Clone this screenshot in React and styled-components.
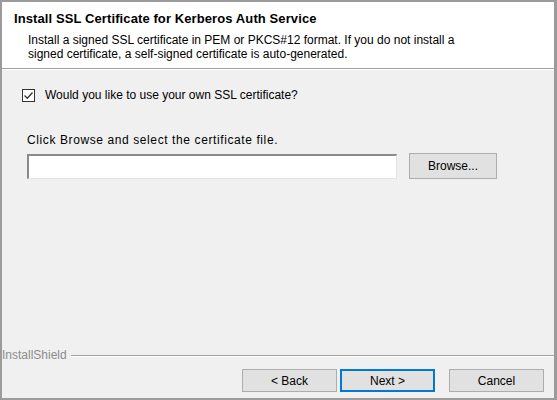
import React from "react";
import styled, { createGlobalStyle } from "styled-components";

const Global = createGlobalStyle`
  html, body { margin: 0; padding: 0; background: #f0f0f0; }
  body { font-family: "Liberation Sans", Arial, sans-serif; font-size: 12px; color: #000; }
  * { box-sizing: border-box; }
`;

const Frame = styled.div`
  width: 557px;
  height: 400px;
  border: 2px solid #9b9b9b;
  border-right-width: 3px;
  background: #f0f0f0;
  display: flex;
  flex-direction: column;
`;

const Header = styled.header`
  background: #fff;
  height: 67px;
  padding: 9px 0 0 12px;
  border-bottom: 1px solid #a0a0a0;
  box-shadow: 0 1px 0 #fff;
`;

const Title = styled.h1`
  margin: 0;
  font-size: 13px;
  font-weight: bold;
  line-height: 15px;
  letter-spacing: 0.1px;
`;

const Subtitle = styled.p`
  margin: 7px 0 0 14px;
  line-height: 14px;
  font-size: 12px;
`;

const Body = styled.main`
  flex: 1;
  padding: 18px 0 0 20px;
`;

const CheckRow = styled.label`
  display: flex;
  align-items: center;
  gap: 10px;
  height: 16px;
`;

const Box = styled.span`
  width: 13px;
  height: 13px;
  border: 1px solid #333;
  background: #fff;
  display: flex;
  align-items: center;
  justify-content: center;
`;

const Prompt = styled.div`
  margin: 30px 0 0 5px;
  line-height: 14px;
  letter-spacing: 0.6px;
`;

const FileRow = styled.div`
  display: flex;
  align-items: center;
  gap: 12px;
  margin: 6px 0 0 5px;
`;

const Field = styled.div`
  width: 370px;
  height: 25px;
  background: #fff;
  border-top: 2px solid #8a8a8a;
  border-left: 2px solid #8a8a8a;
  border-bottom: 1px solid #e3e3e3;
  border-right: 1px solid #e3e3e3;
`;

const Button = styled.button`
  width: ${(p) => p.$w || 95}px;
  height: ${(p) => p.$h || 23}px;
  background: #e1e1e1;
  border: ${(p) => (p.$default ? "2px solid #0078d7" : "1px solid #adadad")};
  font: inherit;
  color: #000;
  padding: 0;
`;

const Footer = styled.footer`
  padding: 0 10px 6px 0;
`;

const Legend = styled.div`
  display: flex;
  align-items: center;
  gap: 4px;
  color: #8c8c8c;
  line-height: 14px;
  &::after {
    content: "";
    flex: 1;
    height: 1px;
    background: #a0a0a0;
    box-shadow: 0 1px 0 #fff;
    margin-right: -10px;
  }
`;

const Actions = styled.div`
  display: flex;
  justify-content: flex-end;
  gap: 3px;
  margin-top: 7px;
`;

const Spacer = styled.span`
  width: 8px;
`;

export default function App() {
  return (
    <>
      <Global />
      <Frame>
        <Header>
          <Title>Install SSL Certificate for Kerberos Auth Service</Title>
          <Subtitle>
            Install a signed SSL certificate in PEM or PKCS#12 format. If you do not install a
            <br />
            signed certificate, a self-signed certificate is auto-generated.
          </Subtitle>
        </Header>
        <Body>
          <CheckRow>
            <Box>
              <svg width="11" height="11" viewBox="0 0 11 11">
                <path d="M1.5 5.5 L4.3 8.3 L9.5 2.5" fill="none" stroke="#333" strokeWidth="1.3" />
              </svg>
            </Box>
            Would you like to use your own SSL certificate?
          </CheckRow>
          <Prompt>Click Browse and select the certificate file.</Prompt>
          <FileRow>
            <Field />
            <Button $w={88} $h={26}>Browse...</Button>
          </FileRow>
        </Body>
        <Footer>
          <Legend>InstallShield</Legend>
          <Actions>
            <Button>&lt; Back</Button>
            <Button $default>Next &gt;</Button>
            <Spacer />
            <Button>Cancel</Button>
          </Actions>
        </Footer>
      </Frame>
    </>
  );
}
